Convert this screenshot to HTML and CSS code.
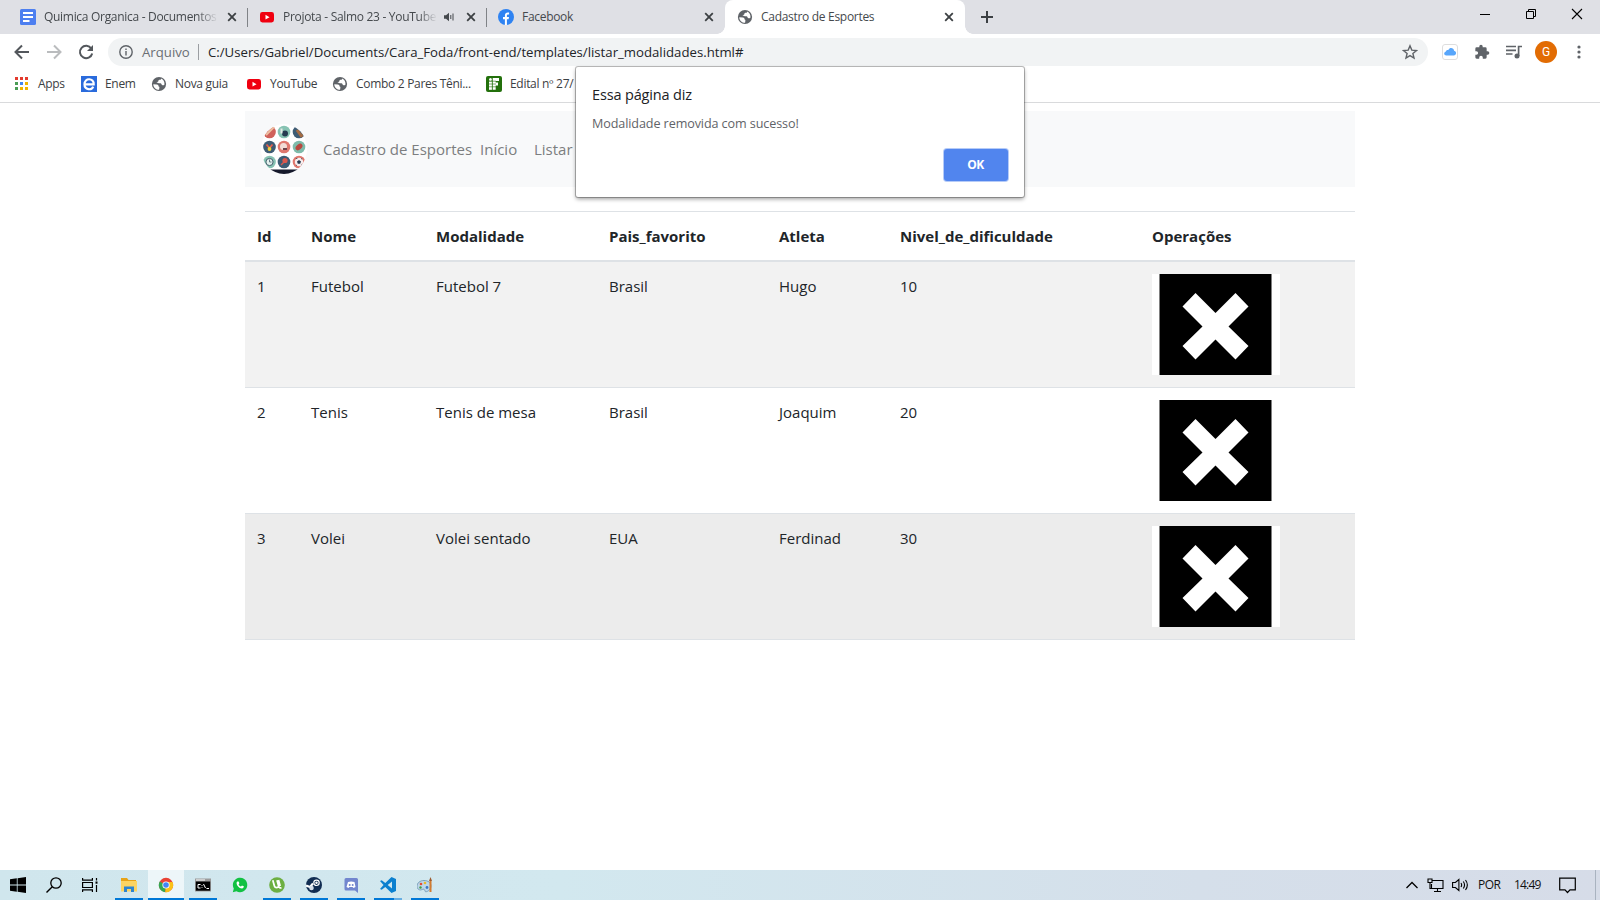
FILE: index.html
```html
<!DOCTYPE html>
<html lang="pt-BR">
<head>
<meta charset="utf-8">
<title>Cadastro de Esportes</title>
<link rel="stylesheet" href="styles.css">
</head>
<body>
<svg class="defs" width="0" height="0">
  <symbol id="x" viewBox="0 0 10 10"><path d="M1.2 1.2l7.6 7.6M8.8 1.2L1.2 8.8" fill="none" stroke="#3c4043" stroke-width="1.8"/></symbol>
  <symbol id="yt" viewBox="0 0 16 16"><rect x="1" y="3" width="14" height="10.5" rx="2.4" fill="#f00010"/><path d="M6.5 5.8v4.8l4-2.4z" fill="#fff"/></symbol>
  <symbol id="globe" viewBox="0 0 16 16"><circle cx="8" cy="8" r="7.1" fill="#5f6368"/><path d="M10.300 2.400c-.2 1.300-1 1.300-1.900 1.300-1 .1-.8 1-1.200 1.700-.4.600-1.500.5-1.500 1.100 0 1 2.600.4 3.900.8 1.300.5.800 1.900 2 2 .7.100 1.400-.4 1.900-.9.200-2.700-1.200-5-3.200-6z" fill="#fff"/><path d="M2.300 8.200l3.600.2c1 .1 1.600.8 1.600 1.700 0 .8 1 .5.900 1.300l-.3 2.400C5 13.800 2.300 11.400 2.300 8.200z" fill="#fff"/></symbol>
  <symbol id="remove" viewBox="0 0 128 101"><path fill="#fff" d="M0 0h128v101H0z"/><path d="M7.500 0H119.500v101H7.500z"/><path fill="#fff" d="M43.500 19L63.500 39L83.500 19L96.500 32.500L76.500 52.500L96.500 72L83.500 85.500L63.500 65.500L43.500 85.500L30.500 72L50.500 52.500L30.500 32.500z"/></symbol>
</svg>

<div class="tabstrip">
  <div class="tab">
    <svg class="fav" viewBox="0 0 16 16"><rect width="16" height="16" rx="1.500" fill="#4d7ff0"/><path d="M3 4h10M3 8h10M3 12h6.500" stroke="#fff" stroke-width="1.800"/></svg>
    <span class="tab-title fade">Quimica Organica - Documentos</span>
    <svg class="close"><use href="#x"/></svg>
  </div>
  <div class="tab divided">
    <svg class="fav"><use href="#yt"/></svg>
    <span class="tab-title fade">Projota - Salmo 23 - YouTube</span>
    <svg class="sound" viewBox="0 0 11 10"><path d="M0 3.300h2L5 .8v8.400L2 6.700H0z" fill="#45494d"/><path d="M6.800 3v4M9 1.500v7" stroke="#45494d" stroke-width="1"/></svg>
    <svg class="close"><use href="#x"/></svg>
  </div>
  <div class="tab divided">
    <svg class="fav" viewBox="0 0 16 16"><circle cx="8" cy="8" r="8" fill="#2f83f2"/><path d="M6.900 16V10.300H5V8h1.900V6.500c0-2 1.200-3 2.900-3l1.300.1v2h-1c-1 0-1.200.6-1.200 1.200V8h2.100l-.4 2.300H8.900V16z" fill="#fff"/></svg>
    <span class="tab-title">Facebook</span>
    <svg class="close"><use href="#x"/></svg>
  </div>
  <div class="tab active">
    <svg class="fav"><use href="#globe"/></svg>
    <span class="tab-title">Cadastro de Esportes</span>
    <svg class="close"><use href="#x"/></svg>
  </div>
  <svg class="newtab" viewBox="0 0 12 12"><path d="M6 0v12M0 6h12" stroke="#3c4043" stroke-width="2"/></svg>
  <div class="winctl">
    <svg viewBox="0 0 46 28"><path d="M18 14.500h10" stroke="#000"/></svg>
    <svg viewBox="0 0 46 28"><path d="M18.500 11.500h7v7h-7zM20.500 11v-1.500h7v7H26" fill="none" stroke="#000"/></svg>
    <svg viewBox="0 0 46 28"><path d="M18 9l10 10M28 9L18 19" stroke="#000" stroke-width="1.100"/></svg>
  </div>
</div>

<div class="toolbar">
  <svg class="nav" viewBox="0 0 32 24"><path d="M29 12H16M22 5.500L15.500 12l6.500 6.500" fill="none" stroke="#53575c" stroke-width="2"/></svg>
  <svg class="nav" viewBox="0 0 32 24"><path d="M15 12h13M22 5.500l6.500 6.500-6.500 6.500" fill="none" stroke="#babcbe" stroke-width="2"/></svg>
  <svg class="nav" viewBox="0 0 32 24"><path d="M27.300 8.500A6.200 6.200 0 1 0 28.200 13.500" fill="none" stroke="#53575c" stroke-width="2"/><path d="M29 5v6h-6z" fill="#53575c"/></svg>
  <div class="omnibox">
    <svg class="info" viewBox="0 0 14 14"><circle cx="7" cy="7" r="6.200" fill="none" stroke="#5f6368" stroke-width="1.400"/><path d="M7 6v4.500M7 3.500V5" stroke="#5f6368" stroke-width="1.400"/></svg>
    <span class="scheme">Arquivo</span>
    <span class="url">C:/Users/Gabriel/Documents/Cara_Foda/front-end/templates/listar_modalidades.html#</span>
    <svg class="star" viewBox="0 0 16 16"><path d="M8 1.800l1.800 4.300 4.700.4-3.600 3 1.100 4.600-4-2.500-4 2.500 1.100-4.600-3.600-3 4.700-.4z" fill="none" stroke="#5f6368" stroke-width="1.400"/></svg>
  </div>
  <div class="exts">
    <svg viewBox="0 0 16 16"><rect x=".5" y=".5" width="15" height="15" rx="2.500" fill="#fff" stroke="#dedede"/><path d="M4.300 11.500C2 11.500 1.300 8.500 3.700 7.800 4 6 5.500 5.700 6.400 6c1.300-3 5.300-2.400 5.700.8 3 .7 2.300 4.700-.3 4.700z" fill="#58a6fb"/></svg>
    <svg viewBox="0 0 24 24"><path fill="#5f6368" d="M20.500 11H19V7a2 2 0 0 0-2-2h-4V3.500a2.500 2.500 0 0 0-5 0V5H4a2 2 0 0 0-2 2v3.800h1.500a2.700 2.700 0 0 1 0 5.400H2V20a2 2 0 0 0 2 2h3.800v-1.500a2.700 2.700 0 0 1 5.400 0V22H17a2 2 0 0 0 2-2v-4h1.500a2.500 2.500 0 0 0 0-5z"/></svg>
    <svg viewBox="0 0 16 16"><path d="M0 2.500h10M0 6.300h10M0 10h6.500M12.600 12V2.500H16" fill="none" stroke="#5f6368" stroke-width="1.700"/><circle cx="11" cy="12" r="2.500" fill="#5f6368"/></svg>
    <span class="avatar">G</span>
    <svg class="menu" viewBox="0 0 16 16"><g fill="#5f6368"><circle cx="8" cy="3" r="1.600"/><circle cx="8" cy="8" r="1.600"/><circle cx="8" cy="13" r="1.600"/></g></svg>
  </div>
</div>

<div class="bookmarks">
  <div class="bm w67"><svg viewBox="0 0 16 16"><path fill="#e33b2e" d="M1 1h3v3H1zM6 1h3v3H6zM11 1h3v3h-3z"/><path fill="#4a9c55" d="M1 6h3v3H1zM1 11h3v3H1z"/><path fill="#4285f4" d="M6 6h3v3H6z"/><path fill="#f0b400" d="M11 6h3v3h-3zM6 11h3v3H6zM11 11h3v3h-3z"/></svg><span>Apps</span></div>
  <div class="bm w70"><svg viewBox="0 0 16 16"><path fill="#2a6bdc" d="M0 0h16v16H0z"/><path d="M3.500 8.300h9.200c.3-6.500-9.200-7-9.200 0 0 6 7.200 6.200 8.700 2.300" fill="none" stroke="#fff" stroke-width="2.200"/></svg><span>Enem</span></div>
  <div class="bm w95"><svg><use href="#globe"/></svg><span>Nova guia</span></div>
  <div class="bm w86"><svg><use href="#yt"/></svg><span>YouTube</span></div>
  <div class="bm w154"><svg><use href="#globe"/></svg><span>Combo 2 Pares Têni...</span></div>
  <div class="bm"><svg viewBox="0 0 16 16"><rect width="16" height="16" rx="2" fill="#23700c"/><path fill="#fff" d="M6.500 2H13v3H9.700v1.500H12v3H9.700v4.300H6.500z"/><path fill="#fff" d="M3 5.300h3v8.500H3z"/><circle cx="4.500" cy="3.500" r="1.500" fill="#fff"/><path d="M3 5.200h7M3 8h7M3 10.800h7M6.300 2v12" stroke="#23700c" stroke-width=".6"/></svg><span>Edital nº 27/</span></div>
</div>

<main class="page">
  <nav class="navbar">
    <svg class="logo" viewBox="0 0 46 50">
      <clipPath id="oval"><ellipse cx="23" cy="25" rx="23" ry="25"/></clipPath>
      <g clip-path="url(#oval)">
        <path fill="#fff" d="M0 0h46v50H0z"/><path fill="#15192b" d="M0 45.500h46V50H0z"/>
        <circle cx="8.500" cy="8" r="6.300" fill="#d0625b"/><circle cx="23" cy="8" r="6.300" fill="#87c3b3"/><circle cx="38" cy="8" r="6.300" fill="#3e5c74"/>
        <circle cx="8.500" cy="23" r="6.300" fill="#3e5c74"/><circle cx="23" cy="23" r="6.300" fill="#df786e"/><circle cx="38" cy="23" r="6.300" fill="#7ebbaa"/>
        <circle cx="8.500" cy="38" r="6.300" fill="#87c3b3"/><circle cx="23" cy="38" r="6.300" fill="#3e5c74"/><circle cx="38" cy="38" r="6.300" fill="#df786e"/>
        <path d="M5 11l8-8" stroke="#edc0a2" stroke-width="2"/><circle cx="24" cy="9.500" r="3" fill="#263a50"/><path d="M20.500 4.500v5" stroke="#e6e9e6" stroke-width="2"/>
        <path d="M36 6l5 7M40 3l3 8" stroke="#a56b42" stroke-width="3"/>
        <path d="M5.500 20.500l3 3.500 3-3.500" fill="none" stroke="#e5614f" stroke-width="1.800"/><circle cx="8.500" cy="25" r="1.900" fill="#f0d33a"/>
        <circle cx="22.500" cy="22.500" r="3.500" fill="#f2dcd5"/><path d="M22 25h4" stroke="#6c4349" stroke-width="2"/>
        <ellipse cx="38" cy="23" rx="4" ry="2.500" transform="rotate(-40 38 23)" fill="#b9483f"/>
        <circle cx="8.500" cy="38" r="3.600" fill="#e3f0ec" stroke="#45606e"/><path d="M8.500 35.500V38h2" fill="none" stroke="#45606e" stroke-width=".8"/>
        <circle cx="24" cy="36.500" r="2.600" fill="#dc584d"/><path d="M20 41l3-3" stroke="#dc584d" stroke-width="1.500"/>
        <circle cx="38" cy="38" r="4.200" fill="#f7eeee"/><path fill="#263a50" d="M38 36l2 1.500-.8 2.200h-2.400l-.8-2.200zM34.500 35l1.500-1 .5 1zM40 34l1.500 1-1 .5zM35 40.500l1 1.200h-1zM40.500 40.300l.6.700-1 .8z"/>
      </g>
    </svg>
    <a class="brand">Cadastro de Esportes</a>
    <a class="link">Início</a>
    <a class="link">Listar</a>
  </nav>
  <table class="table">
    <colgroup><col class="c-id"><col class="c-nome"><col class="c-mod"><col class="c-pais"><col class="c-atl"><col class="c-niv"><col></colgroup>
    <thead><tr><th>Id</th><th>Nome</th><th>Modalidade</th><th>Pais_favorito</th><th>Atleta</th><th>Nivel_de_dificuldade</th><th>Operações</th></tr></thead>
    <tbody>
      <tr class="odd"><td>1</td><td>Futebol</td><td>Futebol 7</td><td>Brasil</td><td>Hugo</td><td>10</td><td><svg class="remove"><use href="#remove"/></svg></td></tr>
      <tr><td>2</td><td>Tenis</td><td>Tenis de mesa</td><td>Brasil</td><td>Joaquim</td><td>20</td><td><svg class="remove"><use href="#remove"/></svg></td></tr>
      <tr class="hover"><td>3</td><td>Volei</td><td>Volei sentado</td><td>EUA</td><td>Ferdinad</td><td>30</td><td><svg class="remove"><use href="#remove"/></svg></td></tr>
    </tbody>
  </table>
</main>

<div class="taskbar">
  <div class="slot"><svg viewBox="0 0 16 16"><path d="M0 2.300l6.800-1v6.300H0zM7.600 1.200L16 0v7.600H7.600zM0 8.400h6.800v6.300L0 13.700zM7.600 8.400H16V16l-8.400-1.200z"/></svg></div>
  <div class="slot"><svg viewBox="0 0 16 16"><circle cx="10" cy="6" r="5.200" fill="none" stroke="#000" stroke-width="1.300"/><path d="M6.300 9.700L.5 15.500" stroke="#000" stroke-width="1.400"/></svg></div>
  <div class="slot view"><svg viewBox="0 0 16 16"><path d="M.6 1v2.100h9.800V1M.6 5.500h9.800v5H.6zM.6 15v-2.100h9.800V15M14.500 1v2.500M14.500 8V15" fill="none" stroke="#000" stroke-width="1.200"/><path d="M13.500 4.500h2v2.200h-2z"/></svg></div>
  <div class="slot run"><svg viewBox="0 0 16 16"><path fill="#e8a317" d="M0 1h6l1.500 2H15v5H0z"/><path fill="#fcd462" d="M0 4h16v10.500H0z"/><path fill="#2c84d0" d="M3 15V9.500h10V15h-3v-3H6v3z"/></svg></div>
  <div class="slot run current"><svg viewBox="0 0 16 16"><circle cx="8" cy="8" r="7.200" fill="#e94335"/><path d="M8 8L1.700 4.500A7.200 7.200 0 0 0 7.200 15.200z" fill="#33a853"/><path d="M8 8l-.8 7.200A7.200 7.200 0 0 0 14.500 5H8z" fill="#fbc116"/><circle cx="8" cy="8" r="3.600" fill="#fff"/><circle cx="8" cy="8" r="2.800" fill="#4285f4"/></svg></div>
  <div class="slot run"><svg viewBox="0 0 16 16"><path fill="#9b9b9b" d="M0 1.500h16v13H0z"/><path fill="#e2e2e2" d="M1 2.300h9v1.400H1z"/><path d="M.8 4.500h14.400v9.200H.8z"/><path d="M5.500 7.500H3v3.500h2.500M7 8v.8M7 10.300v.7M8.500 7l2 4M11.500 11.500H14" fill="none" stroke="#fff" stroke-width="1"/></svg></div>
  <div class="slot"><svg viewBox="0 0 16 16"><path d="M.8 15.200l1-3.700a7.200 7.200 0 1 1 2.700 2.700z" fill="#12c143"/><path d="M5.300 4.500c-2.500 2 2 8 5.700 6.800l1-1.700-2-1-1 1c-1.200-.4-2-1.300-2.400-2.200l.8-1.100-.8-1.900z" fill="#fff"/></svg></div>
  <div class="slot run"><svg viewBox="0 0 16 16"><circle cx="8" cy="8" r="7.800" fill="#6daf42"/><path d="M3.800 3.200l1.700 6c.6 2 3.500 1.800 4.200.2L8 3.200M9.700 9.400c.4 1.300 1.500 1.800 2.800 1.400M9.500 3l1.700 6" fill="none" stroke="#fff" stroke-width="1.700"/></svg></div>
  <div class="slot run"><svg viewBox="0 0 16 16"><circle cx="8" cy="8" r="8" fill="#122d52"/><path d="M0 8.500l4 1.500 3-3.500" fill="none" stroke="#fff" stroke-width="2.200"/><circle cx="10.500" cy="5.800" r="2.700" fill="#122d52" stroke="#fff" stroke-width="1.200"/><circle cx="5.500" cy="11" r="2.300" fill="#d8e1eb"/><circle cx="10.500" cy="5.800" r="1.200" fill="#fff"/></svg></div>
  <div class="slot run"><svg viewBox="0 0 16 16"><path fill="#7286ce" d="M3 1h10.500q1.500 0 1.500 1.500V16l-3-2.500H3Q1.500 13.500 1.500 12V2.500Q1.500 1 3 1z"/><path fill="#fff" d="M5 5q3-1 6.500 0l1 5-2 1-1-1h-3l-1 1-2-1z"/><circle cx="6.700" cy="8" r="1" fill="#7286ce"/><circle cx="9.700" cy="8" r="1" fill="#7286ce"/></svg></div>
  <div class="slot run split"><svg viewBox="0 0 16 16"><path fill="#0b80cf" d="M11.500 0L16 2v12l-4.500 2-6.200-6-3.600 2.800L0 12l3.500-4L0 4l1.700-.8L5.300 6zM12 4.500L7.700 8l4.300 3.500z" fill-rule="evenodd"/></svg></div>
  <div class="slot run"><svg viewBox="0 0 16 16"><path d="M7 3.500c-4 0-7 2.400-7 5.800 0 3 3 4.500 5 3.200 1.500-1 3 0 3 1.500 0 2 6-.2 6-5 0-3.400-3-5.500-7-5.500z" fill="#bdd7e9" stroke="#6b93ae" stroke-width=".8"/><circle cx="4" cy="7" r="1.300" fill="#df4b37"/><circle cx="8" cy="6" r="1.300" fill="#e8b92a"/><circle cx="3.500" cy="10.500" r="1.200" fill="#459b45"/><circle cx="10" cy="10.500" r="1.400" fill="#3979c6"/><path d="M13.500 4v11" stroke="#d37b2e" stroke-width="2"/><path d="M12 4l1.500-4L15 4z" fill="#9e5a2d"/></svg></div>
  <div class="tray">
    <svg class="chev" viewBox="0 0 12 8"><path d="M.5 7L6 1.500 11.500 7" fill="none" stroke="#000" stroke-width="1.300"/></svg>
    <svg class="net" viewBox="0 0 17 16"><path d="M5 3.500h11v8H4.500V7M7 14.500h7M10.500 11.500v3M1 2h4v3.500H1zM3 5.500v6h2" fill="none" stroke="#000" stroke-width="1.100"/></svg>
    <svg class="vol" viewBox="0 0 17 16"><path d="M.6 5.500h2.800l3.500-3v11l-3.500-3H.6zM9 6q1.300 2 0 4M11.300 4.500q2.500 3.500 0 7M13.500 3q3.700 5 0 10" fill="none" stroke="#000" stroke-width="1.100"/></svg>
    <span class="lang">POR</span><span class="clock">14:49</span>
    <svg class="note" viewBox="0 0 17 17"><path d="M.7 1.200h15.600v11.600H11l-2.500 2.700L6 12.800H.7z" fill="none" stroke="#000" stroke-width="1.200"/></svg>
  </div>
</div>

<div class="dialog">
  <div class="dlg-title">Essa página diz</div>
  <div class="dlg-msg">Modalidade removida com sucesso!</div>
  <button class="ok">OK</button>
</div>
</body>
</html>
```
FILE: styles.css
```css
* { box-sizing: border-box; }
body { margin: 0; width: 1600px; height: 900px; overflow: hidden; display: flex; flex-direction: column; background: #fff; font-family: "Open Sans", "Noto Sans", sans-serif; position: relative; }
svg { display: block; flex: none; }
.defs { position: absolute; }
span, a { white-space: nowrap; }

.tabstrip { height: 34px; flex: none; background: #dfe0e5; display: flex; padding-left: 9px; }
.tab { width: 239px; height: 34px; padding: 0 11px; display: flex; align-items: center; font-size: 12px; color: #45494d; position: relative; }
.tab:nth-child(3) { width: 238px; }
.divided::before { content: ""; position: absolute; left: -1px; top: 8px; width: 1px; height: 19px; background: #808387; }
.fav { width: 16px; height: 16px; margin-right: 8px; }
.tab-title { flex: 1; min-width: 0; overflow: hidden; letter-spacing: -0.300px; padding-bottom: 2px; }
.fade { -webkit-mask-image: linear-gradient(90deg, #000 88%, transparent); mask-image: linear-gradient(90deg, #000 88%, transparent); }
.close { width: 10px; height: 10px; margin-left: 9px; }
.sound { width: 11px; height: 10px; margin-left: 7px; }
.sound + .close { margin-left: 11px; }
.active { width: 240px; background: #fff; border-radius: 8px 8px 0 0; padding: 0 11px 0 12px; }
.active::before, .active::after { content: ""; position: absolute; bottom: 0; width: 8px; height: 8px; }
.active::before { left: -8px; background: radial-gradient(circle at 0 0, transparent 7.5px, #fff 8px); }
.active::after { right: -8px; background: radial-gradient(circle at 100% 0, transparent 7.5px, #fff 8px); }
.newtab { width: 12px; height: 12px; margin: 11px 0 0 16px; }
.winctl { margin-left: auto; display: flex; }
.winctl svg { width: 46px; height: 28px; }

.toolbar { height: 36px; flex: none; display: flex; align-items: center; }
.nav { width: 32px; height: 24px; }
.omnibox { width: 1320px; height: 28px; margin-left: 12px; border-radius: 14px; background: #f1f3f4; display: flex; align-items: center; padding: 0 10px 0 11px; }
.info { width: 14px; height: 14px; margin-right: 9px; }
.scheme { width: 57px; margin-right: 9px; border-right: 1px solid #9b9ea2; font-size: 13.200px; line-height: 16px; color: #6a6e73; }
.url { flex: 1; font-size: 13.200px; color: #222428; }
.star { width: 16px; height: 16px; }
.exts { display: flex; align-items: center; gap: 16px; margin-left: 14px; }
.exts svg { width: 16px; height: 16px; }
.exts .menu { margin-left: 1px; }
.avatar { width: 22px; height: 22px; margin: 0 -3px; border-radius: 50%; background: #e26c03; color: #fff; font: 12px/22px Roboto, sans-serif; text-align: center; }

.bookmarks { height: 33px; flex: none; display: flex; align-items: center; padding: 0 0 4px 14px; border-bottom: 1px solid #d9dadc; font-size: 12px; letter-spacing: -0.300px; color: #3c4043; }
.bm { display: flex; align-items: center; gap: 8px; }
.bm svg { width: 16px; height: 16px; }
.bm span { padding-bottom: 2px; }
.w67 { width: 67px; } .w70 { width: 70px; } .w95 { width: 95px; } .w86 { width: 86px; } .w154 { width: 154px; }

.page { flex: 1; min-height: 0; padding: 8px 245px 0; }
.navbar { height: 76px; background: #f8f9fa; display: flex; align-items: center; padding-left: 16px; font-size: 15px; color: #7c7e80; }
.logo { width: 46px; height: 50px; margin-right: 16px; }
.brand { width: 157px; }
.link { width: 54px; }

.table { margin-top: 24px; width: 1110px; table-layout: fixed; border-collapse: separate; border-spacing: 0; font-size: 15px; line-height: 24px; color: #212529; }
.c-id { width: 54px; } .c-nome { width: 125px; } .c-mod { width: 173px; } .c-pais { width: 170px; } .c-atl { width: 121px; } .c-niv { width: 252px; }
.table th { height: 51px; padding: 12px; text-align: left; vertical-align: top; font-weight: 700; border-top: 1px solid #dee2e6; border-bottom: 2px solid #dee2e6; }
.table td { height: 126px; padding: 12px; vertical-align: top; border-bottom: 1px solid #dee2e6; }
.odd { background: #f2f2f2; }
.hover { background: #ececec; }
.remove { width: 128px; height: 101px; }

.taskbar { height: 30px; flex: none; display: flex; background: linear-gradient(90deg, #d0e6ed, #d2e8ef 35%, #d5dfea 75%, #d6dce8); }
.slot { width: 36px; height: 30px; margin-right: 1px; display: flex; align-items: center; justify-content: center; }
.slot:nth-child(-n+2) { margin-right: 0; }
.slot.view { margin-right: 3px; }
.slot svg { width: 16px; height: 16px; }
.run { background: linear-gradient(#0078d7, #0078d7) 50% 100% / 28px 2px no-repeat; }
.current { background: linear-gradient(#0078d7, #0078d7) 50% 100% / 36px 2px no-repeat, #edf6f9; }
.split { background: linear-gradient(90deg, #0078d7 20px, #67aee3 20px) 50% 100% / 28px 2px no-repeat; }
.tray { margin-left: auto; display: flex; align-items: center; height: 30px; width: 190px; margin-right: 4px; border-right: 1px solid #a9b3c0; font-size: 12px; letter-spacing: -0.500px; color: #111; }
.tray span { padding-bottom: 2px; }
.chev { width: 12px; height: 8px; }
.net { width: 17px; height: 16px; margin-left: 9px; }
.vol { width: 17px; height: 16px; margin-left: 8px; }
.lang { width: 36px; margin-left: 9px; }
.clock { width: 45px; letter-spacing: -0.800px; }
.note { width: 17px; height: 17px; }

.dialog { position: absolute; left: 576px; top: 67px; width: 448px; height: 130px; background: #fff; border-radius: 2px; box-shadow: 0 0 0 1px rgba(0,0,0,.25), 0 2px 4px rgba(0,0,0,.4); padding: 16px; display: flex; flex-direction: column; }
.dlg-title { font-size: 14.500px; letter-spacing: -0.150px; line-height: 24px; color: #202124; }
.dlg-msg { font-size: 12.600px; letter-spacing: -0.100px; line-height: 20px; margin-top: 7px; color: #5f6368; }
.ok { align-self: flex-end; margin-top: 15px; width: 64px; height: 32px; flex: none; border: 0; border-radius: 3px; background: #5185ee; box-shadow: 0 0 0 1px #b5cbf8; color: #fff; font: 700 12px "Open Sans", sans-serif; letter-spacing: -0.500px; padding: 0 1px 2px 0; }
```
